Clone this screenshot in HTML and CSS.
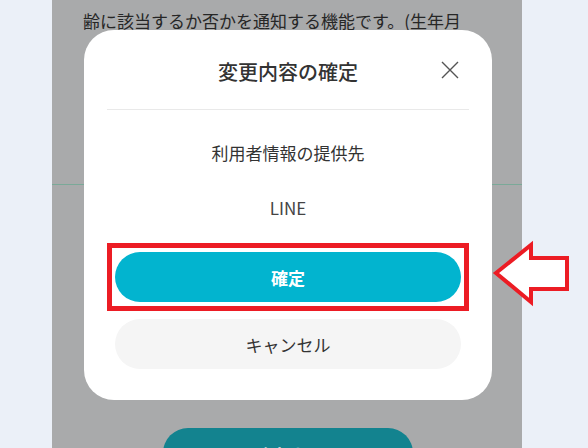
FILE: index.html
```html
<!DOCTYPE html>
<html lang="ja">
<head>
<meta charset="utf-8">
<link rel="stylesheet" href="styles.css">
</head>
<body>
<div class="page">
  <p class="intro">年齢確認は、お客様が指定した条件の年<br>齢に該当するか否かを通知する機能です。(生年月</p>
  <div class="rule"></div>
  <div class="bottom-action"><span class="bottom-btn">確定する</span></div>

  <div class="modal">
    <div class="modal-head">
      <h2 class="modal-title">変更内容の確定</h2>
      <span class="modal-close" aria-label="閉じる">
        <svg width="18" height="18" viewBox="0 0 18 18"><path d="M1 1L17 17M17 1L1 17" stroke="#555" stroke-width="1.4" fill="none"/></svg>
      </span>
    </div>
    <div class="modal-sep"></div>
    <div class="modal-body">
      <p class="modal-label">利用者情報の提供先</p>
      <p class="modal-value">LINE</p>
    </div>
    <div class="highlight">
      <button class="btn btn-primary">確定</button>
    </div>
    <button class="btn btn-cancel">キャンセル</button>
  </div>
</div>
<svg class="arrow" width="80" height="70" viewBox="490 240 80 70">
  <polygon points="496,273 531,245 531,258 567,258 567,289 531,289 531,302" fill="#fff" stroke="#ec1c24" stroke-width="4" stroke-linejoin="miter"/>
</svg>
</body>
</html>
```
FILE: styles.css
```css
html, body {
  margin: 0;
  padding: 0;
}
body {
  background: #ebf0f8;
  width: 588px;
  height: 448px;
  overflow: hidden;
  font-family: "Noto Sans CJK JP", "Noto Sans", sans-serif;
  position: relative;
}
.page {
  position: relative;
  width: 470px;
  height: 448px;
  margin-left: 52px;
  background: #a9aaab;
  overflow: hidden;
}
.intro {
  margin: -24px 0 0;
  padding: 0 20px 0 31px;
  font-size: 17px;
  line-height: 30px;
  color: #262626;
  white-space: nowrap;
}
.rule {
  margin-top: 148px;
  height: 1px;
  background: #7aa998;
}
.bottom-action {
  display: flex;
  justify-content: center;
  margin-top: 243px;
  padding-left: 2px;
}
.bottom-btn {
  width: 250px;
  height: 50px;
  border-radius: 25px;
  background: #13838f;
  color: #b9d6da;
  font-size: 17px;
  font-weight: 700;
  display: flex;
  justify-content: center;
  padding-top: 14px;
  box-sizing: border-box;
}
.modal {
  position: absolute;
  top: 30px;
  left: 32px;
  width: 408px;
  height: 370px;
  box-sizing: border-box;
  background: #fff;
  border-radius: 30px;
  padding: 0 23px;
  display: flex;
  flex-direction: column;
}
.modal-head {
  height: 79px;
  display: flex;
  align-items: center;
  justify-content: center;
}
.modal-title {
  margin: 0;
  font-size: 20px;
  font-weight: 500;
  color: #333;
  line-height: 24px;
  padding-top: 4px;
}
.modal-close {
  position: absolute;
  top: 31px;
  right: 33px;
  width: 18px;
  height: 18px;
  display: block;
}
.modal-close svg { display: block; }
.modal-sep {
  height: 1px;
  background: #e9e9e9;
}
.modal-body {
  display: flex;
  flex-direction: column;
  align-items: center;
  padding-top: 31px;
}
.modal-label {
  margin: 0;
  font-size: 17px;
  line-height: 24px;
  color: #333;
}
.modal-value {
  margin: 31px 0 0;
  font-size: 17px;
  line-height: 24px;
  color: #444;
}
.highlight {
  margin-top: 23px;
  border: 5px solid #ec1c24;
  padding: 4px 3px;
  display: flex;
}
.btn {
  flex: 1;
  height: 50px;
  border: 0;
  border-radius: 25px;
  font-family: "Noto Sans CJK JP", "Noto Sans", sans-serif;
  font-size: 17px;
  padding: 0;
  cursor: pointer;
}
.btn-primary {
  background: #02b4cf;
  color: #fff;
  font-weight: 700;
}
.btn-cancel {
  flex: none;
  margin: 8px 8px 0;
  background: #f5f5f5;
  color: #333;
}
.arrow {
  position: absolute;
  left: 490px;
  top: 240px;
}
```
